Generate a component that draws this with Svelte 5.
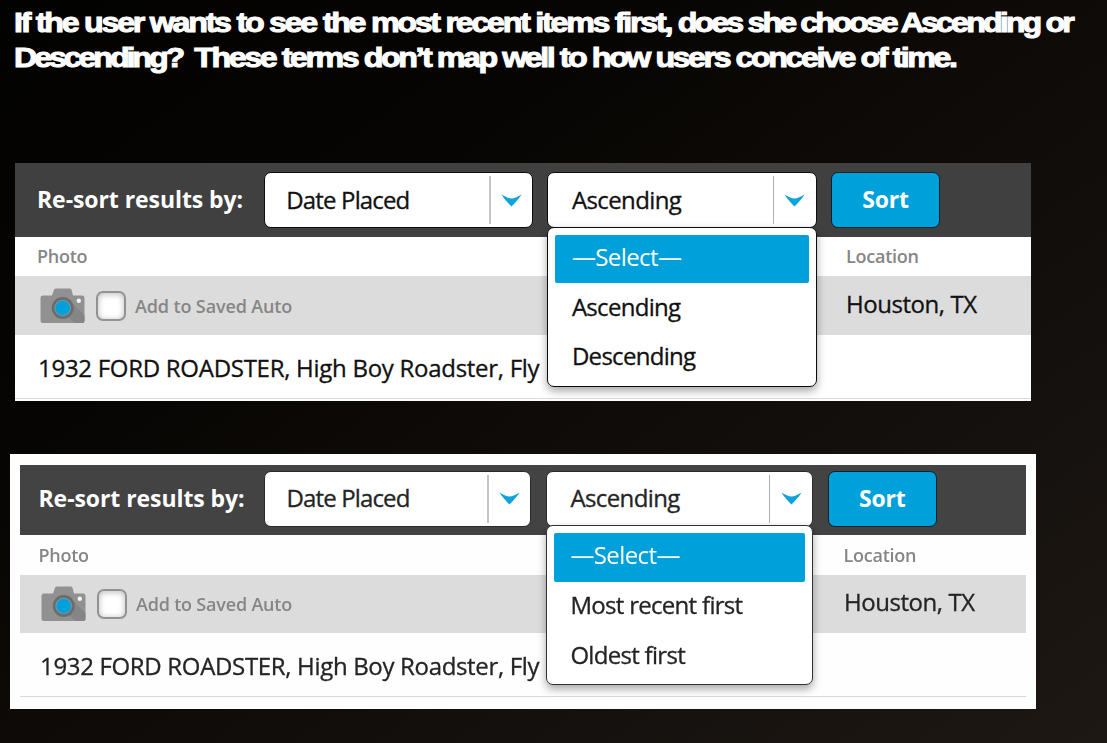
<script>
  const panels = [
    { kind: 'before', options: ['—Select—', 'Ascending', 'Descending'] },
    { kind: 'after', options: ['—Select—', 'Most recent first', 'Oldest first'] }
  ];
</script>

{#snippet chevron()}
  <svg class="chevron" viewBox="0 0 21 13" width="21" height="13" aria-hidden="true">
    <path d="M0.4 0.6 C4 2.4 7.6 4.6 10.5 4.6 C13.4 4.6 17 2.4 20.6 0.6 C17.8 5 14.2 9 10.5 12.6 C6.8 9 3.2 5 0.4 0.6Z" fill="#0ea3da" />
  </svg>
{/snippet}

<main>
  <h1>
    <span class="line"><span class="loose">If the user wants to see the most recent items first,</span>{' '}<span class="tight">does she choose Ascending or</span></span>
    <span class="line"><span class="tighter">Descending?&nbsp;</span>{' '}These terms don’t map well to how users conceive of time.</span>
  </h1>

  {#each panels as p}
    <section class="panel {p.kind}">
      <div class="inner">
        <div class="toolbar">
          <span class="label">Re-sort results by:</span>
          <div class="select first"><span class="value date">Date Placed</span><span class="arrow">{@render chevron()}</span></div>
          <div class="select second">
            <span class="value">Ascending</span><span class="arrow">{@render chevron()}</span>
            <ul class="menu">
              {#each p.options as o, i}
                <li class:active={i === 0}><span>{o}</span></li>
              {/each}
            </ul>
          </div>
          <button>Sort</button>
        </div>
        <div class="row head"><span class="photo">Photo</span><span class="loc">Location</span></div>
        <div class="row item">
          <svg class="camera" viewBox="0 0 45 36" width="45" height="36" aria-hidden="true">
            <path d="M2.5 7.5H12L14 1.8Q14.5 .5 16 .5H29.5Q31 .5 31.5 1.8L33 7.5H42Q44.5 7.5 44.5 10V32.5Q44.5 35 42 35H3Q.5 35 .5 32.5V10Q.5 7.5 2.5 7.5Z" fill="#919191" />
            <path d="M31 14L44.5 27V32.5Q44.5 35 42 35H35L27 28Z" fill="#858585" />
            <circle cx="22.7" cy="20" r="11" fill="#6c6c6c" />
            <circle cx="22.7" cy="20" r="8.3" fill="#7199a5" />
            <circle cx="22.7" cy="20" r="7.2" fill="#00a0da" />
            <circle cx="38.8" cy="12.8" r="2.2" fill="#f4f4f4" />
          </svg>
          <span class="check"></span>
          <span class="add">Add to Saved Auto</span>
          <span class="city">Houston, TX</span>
        </div>
        <div class="row title"><span>1932 FORD ROADSTER, High Boy Roadster, Fly</span></div>
      </div>
    </section>
  {/each}
</main>

<style>
  :global(body) { margin: 0; background: #050403; }
  main {
    box-sizing: border-box;
    width: 1107px;
    height: 743px;
    overflow: hidden;
    background: linear-gradient(145deg, #020201 0%, #070503 30%, #130f0c 68%, #1d1814 100%);
    font-family: "Open Sans", "Noto Sans", sans-serif;
    padding-top: 6px;
  }
  h1 {
    margin: 0 0 0 14px;
    height: 157px;
    font: 700 28px/34.5px "Liberation Sans", Arial, sans-serif;
    letter-spacing: -2.12px;
    color: #fff;
    -webkit-text-stroke: 1px #fff;
    white-space: nowrap;
    transform: scaleX(1.15);
    transform-origin: 0 0;
  }
  .line { display: block; }
  .loose { letter-spacing: -1.96px; }
  .tight { letter-spacing: -2.5px; }
  .tighter { letter-spacing: -2.7px; }

  .panel { box-sizing: border-box; background: #fff; }
  .before {
    --sw: 269.3px; --sh: 56px; --gap: 14.3px; --ink: #111; --bar: #404040;
    margin-left: 15px; width: 1016px; height: 238px;
  }
  .after {
    --sw: 267.5px; --sh: 55.5px; --gap: 14.5px; --ink: #242424; --bar: #434343;
    margin: 53px 0 0 10px; width: 1026px; height: 255px; padding: 10.5px 10.5px 0 10px; background: #fefefe;
  }
  .after .inner { filter: blur(0.6px); }
  .toolbar {
    box-sizing: border-box;
    display: flex;
    align-items: flex-start;
    gap: var(--gap);
    background: var(--bar);
    position: relative;
    z-index: 1;
  }
  .before .toolbar { height: 74px; padding: 9px 0 0 22px; }
  .after .toolbar { height: 70.5px; padding: 6.5px 0 0 18.5px; }
  .label {
    box-sizing: border-box;
    font-weight: 700;
    font-size: 23px;
    letter-spacing: -0.07px;
    color: #fff;
    line-height: 54px;
    white-space: nowrap;
  }
  .before .label { width: 212.5px; }
  .after .label { width: 210.9px; }
  .select {
    box-sizing: border-box;
    position: relative;
    display: flex;
    flex: none;
    align-items: center;
    width: var(--sw);
    height: var(--sh);
    background: #fff;
    border: 1.5px solid #0c0c0c;
    border-radius: 7px;
    font-size: 24px;
    color: var(--ink);
  }
  .value, li, .city, .title { -webkit-text-stroke: 0.3px currentColor; }
  .value { flex: 1; padding: 0 0 1px 21.5px; line-height: 50px; letter-spacing: -0.6px; }
  .date { letter-spacing: -0.85px; }
  .second .value { padding-left: 23.5px; }
  .arrow {
    box-sizing: border-box;
    display: flex;
    align-items: center;
    justify-content: center;
    width: 43px;
    height: 48px;
    border-left: 1px solid #b0b0b0;
  }
  .first .arrow { border-left: 2px solid #c4c4c4; }
  .chevron { display: block; }
  .menu {
    box-sizing: border-box;
    position: absolute;
    left: -1px;
    top: calc(100% - 0.5px);
    width: calc(100% + 2px);
    height: 160px;
    margin: 0;
    padding: 7px;
    list-style: none;
    background: #fff;
    border: 1px solid #0c0c0c;
    border-radius: 7px;
    box-shadow: 0 4px 9px rgba(0, 0, 0, 0.35);
  }
  li { height: 48.5px; margin-bottom: 0.8px; padding-left: 16.5px; line-height: 45px; letter-spacing: -0.7px; border-radius: 2px; white-space: nowrap; }
  .active { background: #00a0da; color: #fff; letter-spacing: -0.6px; line-height: 44px; -webkit-text-stroke-width: 0; }
  button {
    box-sizing: border-box;
    width: 109px;
    height: var(--sh);
    padding: 0 0 2px;
    background: #00a0da;
    border: 1.5px solid #07222e;
    border-radius: 7px;
    color: #fff;
    font: 700 23px "Open Sans", sans-serif;
    letter-spacing: -0.2px;
  }
  .row { box-sizing: border-box; display: flex; align-items: center; white-space: nowrap; }
  .head { height: 39px; padding: 0 0 2px 22px; font-size: 18px; font-weight: 600; color: #868686; letter-spacing: -0.25px; }
  .head .photo { width: 809px; }
  .item { height: 59px; padding-left: 25px; background: #dcdcdc; }
  .check {
    box-sizing: border-box;
    width: 30px;
    height: 30px;
    margin-left: 11px;
    border: 2px solid #929292;
    border-radius: 7px;
    background: #fff;
    box-shadow: inset 0 1px 6px rgba(0, 0, 0, 0.28);
  }
  .add { width: 711px; margin-left: 9px; font-size: 18px; font-weight: 600; color: #868686; letter-spacing: -0.13px; }
  .city { font-size: 24px; color: var(--ink); letter-spacing: -0.45px; padding-bottom: 4px; }
  .title { height: 64px; padding: 2px 0 0 23px; border-bottom: 1px solid #d9d9d9; font-size: 24px; color: var(--ink); letter-spacing: -0.28px; }
  .after .head { height: 39.5px; padding-left: 18.5px; padding-bottom: 0; }
  .after .head .photo { width: 805px; }
  .after .item { height: 58px; padding-left: 21px; }
  .after .add { width: 708px; letter-spacing: -0.2px; }
  .after .title { padding-left: 20px; letter-spacing: -0.33px; }
  .after .select { border-color: #2a2a2a; }
  .after .menu { border-color: #333; }
</style>
